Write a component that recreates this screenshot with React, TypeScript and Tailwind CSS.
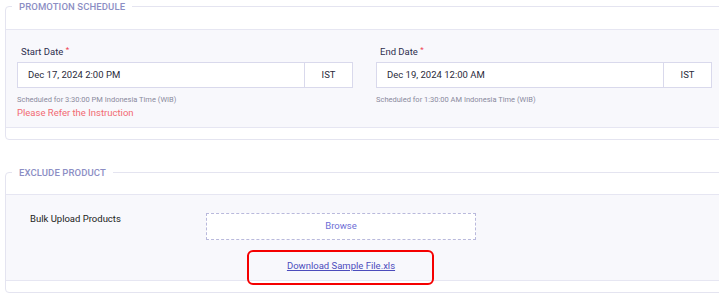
import React from "react";

const scheduleFields = [
  {
    label: "Start Date",
    value: "Dec 17, 2024 2:00 PM",
    note: "Scheduled for 3:30:00 PM Indonesia Time (WIB)",
    warning: "Please Refer the Instruction",
  },
  {
    label: "End Date",
    value: "Dec 19, 2024 12:00 AM",
    note: "Scheduled for 1:30:00 AM Indonesia Time (WIB)",
  },
];

function Section({ title, className, children }: { title: string; className?: string; children: React.ReactNode }) {
  return (
    <fieldset className={`ml-[5px] w-[740px] rounded-tl-[4px] rounded-bl-[4px] border border-[#e4e4f0] pb-[11px] ${className ?? ""}`}>
      <legend className="ml-[6px] px-[7px] text-[9.5px] leading-[13px] font-medium uppercase tracking-[0.1px] text-[#8c8ec4]">
        {title}
      </legend>
      {children}
    </fieldset>
  );
}

export default function App() {
  return (
    <div className="w-[719px] overflow-hidden bg-white font-[Roboto,sans-serif] pb-[5px]">
      {/* Promotion schedule */}
      <Section title="Promotion Schedule">
        <div className="mt-[16px] border-y border-[#e6e6f2] bg-[#f8f8fc] pl-[11px] pt-[16px] pb-[8px]">
          <div className="grid grid-cols-[336px_336px] gap-x-[23px]">
            {scheduleFields.map((f) => (
              <div key={f.label} className="flex flex-col">
                <div className="pl-[4px] text-[9.5px] leading-[12px] text-[#2e2e4e]">
                  {f.label} <span className="relative -top-[3px] text-[8px] text-[#f04050]">*</span>
                </div>
                <div className="mt-[3px] flex h-[26px]">
                  <div className="flex w-[288px] items-center border border-[#d9d9ec] bg-white pl-[10px] text-[9.5px] text-[#2a2a3a]">
                    {f.value}
                  </div>
                  <div className="flex w-[48px] items-center justify-center border border-l-0 border-[#d9d9ec] bg-white text-[9.5px] text-[#2a2a3a]">
                    IST
                  </div>
                </div>
                <div className="mt-[7px] text-[7.5px] leading-[10px] text-[#8a8a9c]">{f.note}</div>
                {f.warning && (
                  <div className="mt-[2px] text-[9.5px] leading-[12px] text-[#f26a72]">{f.warning}</div>
                )}
              </div>
            ))}
          </div>
        </div>
      </Section>

      {/* Exclude product */}
      <Section title="Exclude Product" className="mt-[26px]">
        <div className="mt-[15px] border-y border-[#e6e6f2] bg-[#f8f8fc] pl-[24px] pt-[18px] pb-[8px]">
          <div className="flex">
            <div className="w-[176px] text-[9.5px] leading-[12px] text-[#222]">Bulk Upload Products</div>
            <div className="flex w-[270px] flex-col items-center">
              <button
                type="button"
                className="flex h-[27px] w-full items-center justify-center border border-dashed border-[#b9b9dc] bg-white text-[9.5px] text-[#6e6ed6]"
              >
                Browse
              </button>
              <span className="relative mt-[20px] block text-[9.5px] leading-[12px]">
                <a href="#" className="text-[#4c4cbc] underline">
                  Download Sample File.xls
                </a>
                <span className="pointer-events-none absolute -left-[40px] -right-[39px] -top-[10px] -bottom-[13px] rounded-[6px] border-2 border-[#f50000]" />
              </span>
            </div>
          </div>
        </div>
      </Section>
    </div>
  );
}
